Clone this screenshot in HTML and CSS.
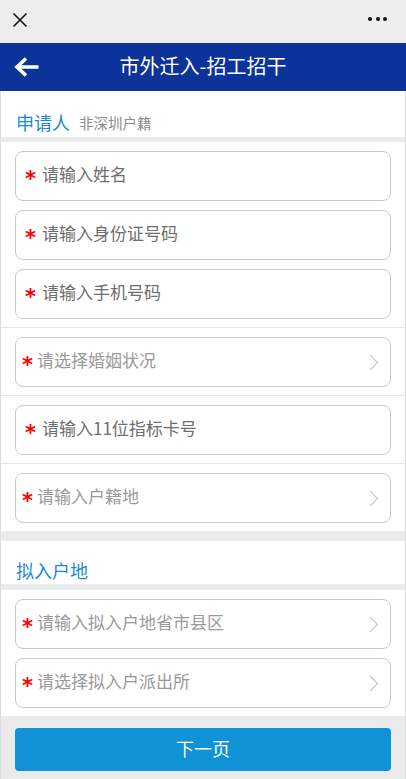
FILE: index.html
```html
<!DOCTYPE html>
<html lang="zh-CN">

<head>
    <meta charset="UTF-8">
    <meta name="viewport" content="width=device-width, initial-scale=1.0">
    <title>市外迁入-招工招干</title>

    <link rel="stylesheet" href="styles.css">
</head>

<body>

    <div class="topbar">
        <svg class="close" width="16" height="16" viewBox="0 0 16 16">
            <path d="M1.5 1.5 L14.5 14.5 M14.5 1.5 L1.5 14.5" stroke="#111" stroke-width="1.6" fill="none" />
        </svg>
        <div class="dots"><span></span><span></span><span></span></div>
    </div>

    <div class="header">
        <svg class="back" width="26" height="22" viewBox="0 0 26 22">
            <path d="M24.5 11 H4 M12 2.5 L3 11 L12 19.5" stroke="#fff" stroke-width="3.6" fill="none" />
        </svg>
        <h1>市外迁入-招工招干</h1>
    </div>

    <div class="content">
        <div class="section-title">
            <h2>申请人</h2><span class="sub">非深圳户籍</span>
        </div>

        <div class="group">
            <label class="field"><span class="star">*</span><span class="ph">请输入姓名</span></label>
            <label class="field"><span class="star">*</span><span class="ph">请输入身份证号码</span></label>
            <label class="field"><span class="star">*</span><span class="ph">请输入手机号码</span></label>
        </div>

        <div class="row">
            <label class="field select"><span class="star">*</span><span class="ph">请选择婚姻状况</span><i class="chev"></i></label>
        </div>
        <div class="row">
            <label class="field"><span class="star">*</span><span class="ph">请输入11位指标卡号</span></label>
        </div>
        <div class="row">
            <label class="field select"><span class="star">*</span><span class="ph">请输入户籍地</span><i class="chev"></i></label>
        </div>

        <div class="section-title second">
            <h2>拟入户地</h2>
        </div>

        <div class="group">
            <label class="field select"><span class="star">*</span><span class="ph">请输入拟入户地省市县区</span><i class="chev"></i></label>
            <label class="field select"><span class="star">*</span><span class="ph">请选择拟入户派出所</span><i class="chev"></i></label>
        </div>

        <div class="footer">
            <button class="next">下一页</button>
        </div>
    </div>

</body>

</html>
```

FILE: styles.css
```css
body {
    margin: 0;
    width: 406px;
    font-family: "Noto Sans CJK SC", "DejaVu Sans", sans-serif;
    background: #fff;
}

.topbar {
    height: 43px;
    background: #ededed;
    display: flex;
    align-items: center;
    justify-content: space-between;
    padding: 0 19px 0 12px;
    box-sizing: border-box;
}

.close {
    display: block;
    margin-top: -4px;
}

.dots {
    display: flex;
    gap: 3.5px;
    margin-top: -5px;
}

.dots span {
    width: 4px;
    height: 4px;
    border-radius: 50%;
    background: #111;
}

.header {
    height: 48px;
    background: #0b3399;
    display: flex;
    align-items: center;
    position: relative;
}

.back {
    display: block;
    margin-left: 14px;
}

.header h1 {
    margin: -4px 0 0;
    position: absolute;
    left: 0;
    right: 0;
    text-align: center;
    color: #fff;
    font-size: 20px;
    font-weight: normal;
    pointer-events: none;
}

.content {
    border-left: 1px solid #dcdcdc;
    border-right: 1px solid #dcdcdc;
}

.section-title {
    height: 46px;
    display: flex;
    align-items: flex-end;
    padding: 0 0 0 15px;
    border-bottom: 5px solid #ebebeb;
    box-sizing: content-box;
}

.section-title h2 {
    margin: 0 0 3px;
    font-size: 18px;
    font-weight: normal;
    color: #1a8ad6;
    line-height: 24px;
}

.section-title .sub {
    margin: 0 0 4px 9px;
    font-size: 14.5px;
    color: #8c8c8c;
    line-height: 20px;
}

.section-title.second {
    height: 43px;
    border-top: 10px solid #ebebeb;
    border-bottom-width: 6px;
}

.section-title.second h2 {
    margin-bottom: 2px;
}

.group {
    display: flex;
    flex-direction: column;
    gap: 9px;
    padding: 9px 0 8px;
}

.row {
    border-top: 1px solid #e6e6e6;
    padding: 9px 0 8px;
}

.field {
    height: 50px;
    margin: 0 14px;
    border: 1px solid #c9c9c9;
    border-radius: 8px;
    display: flex;
    align-items: center;
    box-sizing: border-box;
    padding: 0 0 0 9px;
}

.star {
    color: #f00;
    font-family: "DejaVu Sans", sans-serif;
    font-size: 21px;
    line-height: 20px;
    width: 17px;
    height: 14px;
    font-weight: bold;
}

.ph {
    font-size: 17px;
    color: #6e6e6e;
    margin-top: -5px;
}

.select {
    padding-left: 6px;
}

.select .star {
    width: 15px;
}

.select .ph {
    color: #9a9a9a;
}

.chev {
    margin-left: auto;
    margin-right: 14px;
    width: 10px;
    height: 10px;
    border-top: 1.5px solid #bcbcbc;
    border-right: 1.5px solid #bcbcbc;
    transform: rotate(45deg);
}

.footer {
    background: #ebebeb;
    padding: 12px 14px 8px;
}

.next {
    display: block;
    width: 100%;
    height: 43px;
    border: none;
    border-radius: 4px;
    background: #0f92d6;
    color: #fff;
    font-family: "Noto Sans CJK SC", sans-serif;
    font-size: 18px;
    padding: 0 0 3px;
}
```
